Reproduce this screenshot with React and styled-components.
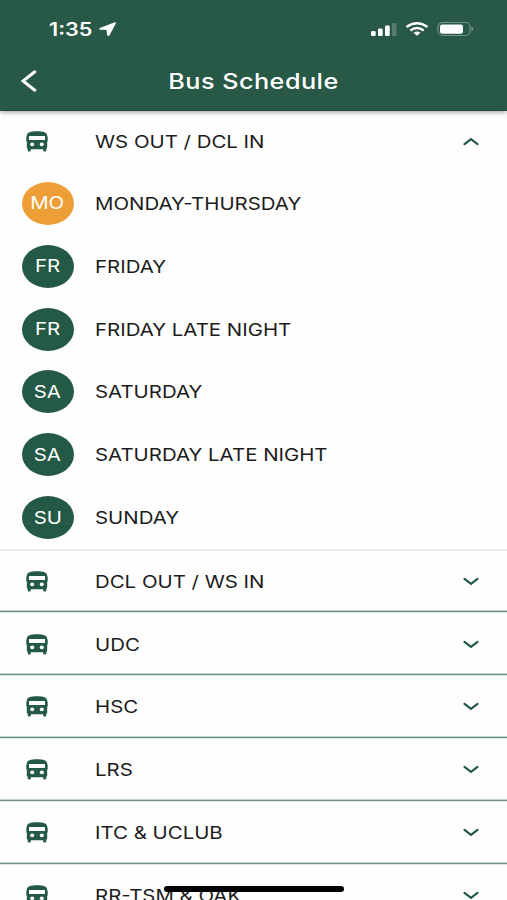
import styled, { createGlobalStyle } from 'styled-components';

const days = [
  { code: 'MO', label: 'MONDAY-THURSDAY', active: true },
  { code: 'FR', label: 'FRIDAY' },
  { code: 'FR', label: 'FRIDAY LATE NIGHT' },
  { code: 'SA', label: 'SATURDAY' },
  { code: 'SA', label: 'SATURDAY LATE NIGHT' },
  { code: 'SU', label: 'SUNDAY' },
];

const routes = ['DCL OUT / WS IN', 'UDC', 'HSC', 'LRS', 'ITC & UCLUB', 'RR-TSM & OAK'];

function BusIcon() {
  return (
    <Bus viewBox="0 0 22 21">
      <path
        fillRule="evenodd"
        d="M0.800 4.500C1 1.500 4.500 0.300 11 0.300S21 1.500 21.200 4.500L21.700 6.500V10L21.200 11V16.200Q21.200 17.200 20.300 17.800V19.500Q20.300 20.600 19 20.600H18.300Q17.200 20.600 17.200 19.500V18.200H4.800V19.500Q4.800 20.600 3.700 20.600H3Q1.700 20.600 1.700 19.500V17.800Q0.800 17.200 0.800 16.200V11L0.300 10V6.500ZM3 5.100V9H19V5.100ZM6.200 11.500a2.100 1.900 0 1 0 0.010 0ZM15.800 11.500a2.100 1.900 0 1 0 0.010 0Z"
      />
    </Bus>
  );
}

function Route({ name, open, compact }) {
  return (
    <RouteRow $open={open} $compact={open || compact}>
      <IconSlot>
        <BusIcon />
      </IconSlot>
      <Label>{name}</Label>
      <Chevron viewBox="0 0 16 9" $open={open}>
        <path d="M1.500 1.800 8 6.800l6.500-5" />
      </Chevron>
    </RouteRow>
  );
}

function App() {
  return (
    <Screen>
      <GlobalStyle />
      <Header>
        <StatusBar>
          <Time>1:35</Time>
          <LocationIcon viewBox="0 0 17 14">
            <path d="M15.800 0.300 0.900 5.900Q-0.400 7 1 7.800L7.600 8 8 13Q9 14.600 10.600 13.300L16.900 1.200Q17 0 15.800 0.300Z" />
          </LocationIcon>
          <StatusIcons viewBox="0 0 104 16">
            <rect x="0" y="10" width="4.700" height="5" rx="1.200" />
            <rect x="7" y="7.500" width="4.700" height="7.500" rx="1.200" />
            <rect x="14" y="4.500" width="4.700" height="10.500" rx="1.200" />
            <rect x="21" y="2" width="4.500" height="13" rx="1.200" opacity="0.22" />
            <g fill="none" stroke="#fff" strokeWidth="2.500">
              <path d="M35.500 6Q46 -1.500 56.500 6" />
              <path d="M39.300 9.400Q46 4.500 52.700 9.400" />
            </g>
            <path d="M42.500 11.800Q46 9.200 49.500 11.800L46 14.700Z" />
            <rect x="67" y="1.500" width="32" height="13" rx="4.500" fill="none" stroke="#fff" strokeWidth="1.200" opacity="0.35" />
            <rect x="69" y="3.500" width="23" height="9.300" rx="2.200" />
            <path d="M100.500 5.800Q104 8 100.500 10.200Z" opacity="0.45" />
          </StatusIcons>
        </StatusBar>
        <TitleBar>
          <BackIcon viewBox="0 0 16 22">
            <path d="M13.800 1.800 2 11l11.800 9.200" />
          </BackIcon>
          <Title>Bus Schedule</Title>
        </TitleBar>
      </Header>

      <Route name="WS OUT / DCL IN" open />
      <DayList>
        {days.map((day) => (
          <DayRow key={day.label}>
            <IconSlot>
              <DayBadge $active={day.active}>
                <BadgeText>{day.code}</BadgeText>
              </DayBadge>
            </IconSlot>
            <Label>{day.label}</Label>
          </DayRow>
        ))}
      </DayList>
      {routes.map((name, i) => (
        <Route key={name} name={name} compact={i === 0} />
      ))}
      <HomeIndicator />
    </Screen>
  );
}

export default App;

const GlobalStyle = createGlobalStyle`
  body {
    margin: 0;
    overflow: hidden;
    background: #fff;
    font-family: Inter, "Liberation Sans", sans-serif;
  }
`;

const Screen = styled.div`
  position: relative;
  width: 507px;
  height: 900px;
  overflow: hidden;
  background: #fefefe;
`;

const Header = styled.header`
  height: 111px;
  box-sizing: border-box;
  color: #fff;
  background: #285846;
  border-bottom: 1px solid #1f4f3c;
  box-shadow: 0 1px 5px rgba(0, 0, 0, 0.4);
`;

const StatusBar = styled.div`
  display: flex;
  align-items: center;
  height: 57px;
  padding: 0 32.5px 0 49px;
`;

const Time = styled.span`
  width: 44px;
  padding-top: 1px;
  font-size: 18px;
  font-weight: 600;
  transform: scaleX(1.2);
  transform-origin: left;
`;

const LocationIcon = styled.svg`
  width: 17px;
  height: 14px;
  margin-left: 6px;
  fill: #fff;
`;

const StatusIcons = styled.svg`
  width: 104px;
  height: 16px;
  margin-left: auto;
  fill: #fff;
`;

const TitleBar = styled.div`
  display: flex;
  align-items: center;
  height: 48px;
  padding: 0 21px;
`;

const BackIcon = styled.svg`
  width: 16px;
  height: 22px;
  fill: none;
  stroke: #fff;
  stroke-width: 3;
  stroke-linecap: round;
`;

const Title = styled.h1`
  flex: 1;
  margin: 0 16px 0 0;
  font-size: 21px;
  font-weight: 500;
  text-align: center;
  letter-spacing: 0.4px;
  transform: scaleX(1.2);
`;

const RouteRow = styled.div`
  display: flex;
  align-items: center;
  box-sizing: border-box;
  height: ${({ $compact }) => ($compact ? '61px' : '62.9px')};
  padding: ${({ $compact }) => ($compact ? '0 28px 0 0' : '2px 28px 0 0')};
  border-bottom: ${({ $open }) => ($open ? 'none' : '1px solid #6f9184')};
  box-shadow: ${({ $open }) => ($open ? 'none' : '0 1px #dde8e4, inset 0 -1px #c3d5ce')};
`;

const IconSlot = styled.div`
  flex: none;
  width: 95px;
  padding-left: 21.5px;
  box-sizing: border-box;
`;

const Bus = styled.svg`
  display: block;
  width: 22px;
  height: 21px;
  margin-left: 4.5px;
  fill: #245a45;
`;

const Label = styled.span`
  flex: 1;
  padding-top: 1px;
  color: #1c1c1c;
  font-size: 17px;
  white-space: nowrap;
  transform: scaleX(1.2);
  transform-origin: left;
`;

const Chevron = styled.svg`
  width: 16px;
  height: 9px;
  fill: none;
  stroke: #245a45;
  stroke-width: 2.200;
  stroke-linecap: round;
  transform: ${({ $open }) => ($open ? 'rotate(180deg)' : 'none')};
`;

const DayList = styled.div`
  border-bottom: 2px solid #ececec;
`;

const DayRow = styled.div`
  display: flex;
  align-items: center;
  height: 62.85px;
`;

const DayBadge = styled.div`
  display: flex;
  align-items: center;
  justify-content: center;
  width: 52px;
  height: 43px;
  border-radius: 50%;
  color: #fff;
  background: ${({ $active }) => ($active ? '#ee9e37' : '#245a45')};
`;

const BadgeText = styled.span`
  font-size: 17px;
  transform: scaleX(1.2);
`;

const HomeIndicator = styled.div`
  position: absolute;
  left: 164px;
  bottom: 8px;
  width: 180px;
  height: 6px;
  border-radius: 3px;
  background: #000;
`;
